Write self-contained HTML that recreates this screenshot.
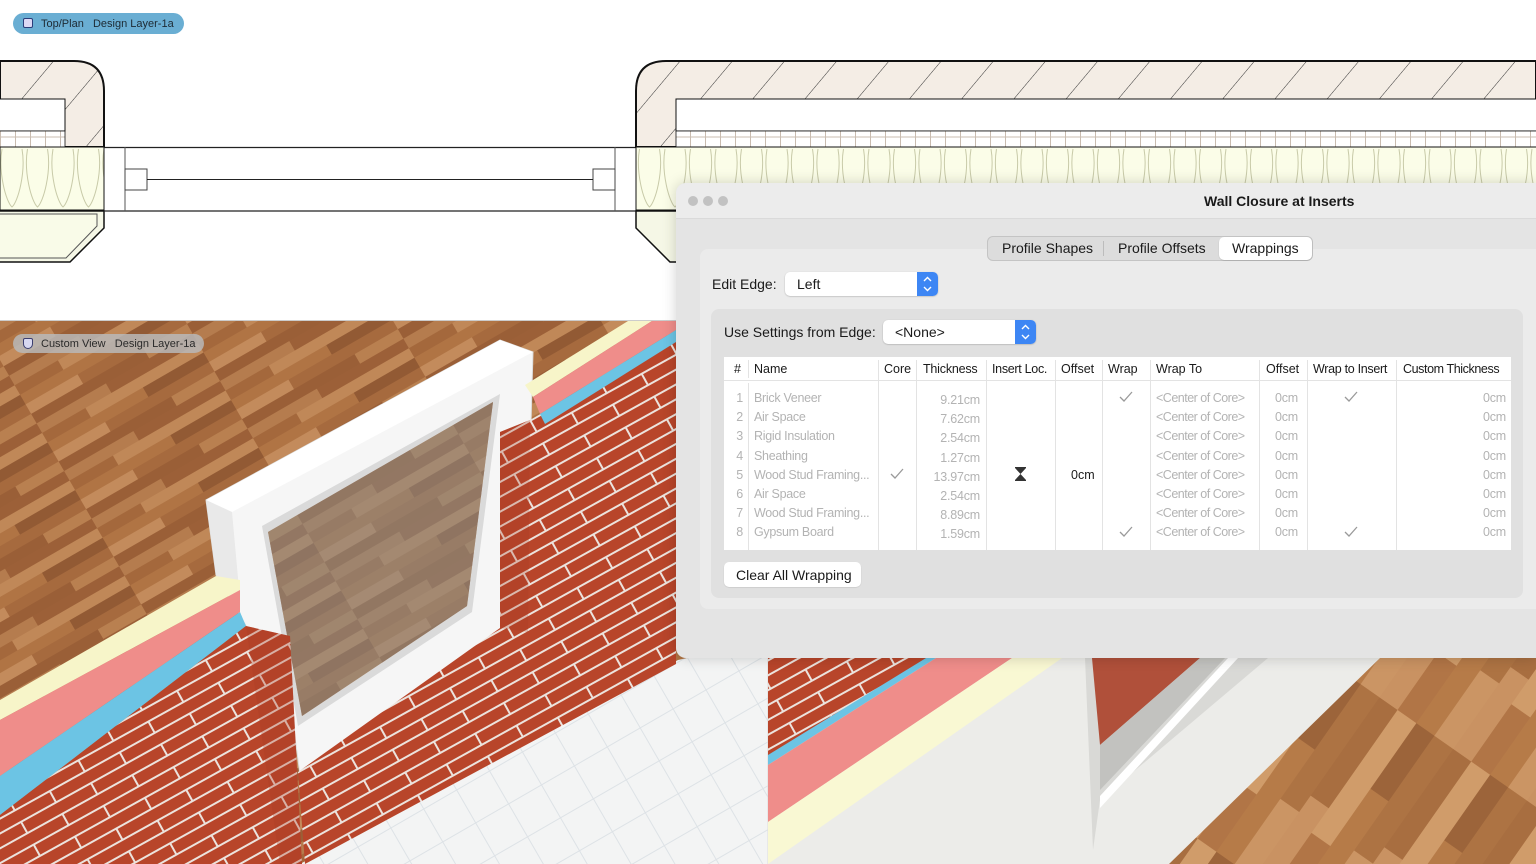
<!DOCTYPE html>
<html><head><meta charset="utf-8"><style>
*{margin:0;padding:0;box-sizing:border-box}
body{width:1536px;height:864px;position:relative;overflow:hidden;background:#fff;font-family:"Liberation Sans",sans-serif;color:#1a1a1a}
.a{position:absolute;white-space:nowrap}
.pill{position:absolute;border-radius:11px;font-size:11px;display:flex;align-items:center;padding-left:28px;color:#1d2a33}
.t{position:absolute;font-size:12.5px;line-height:16px;white-space:nowrap}
.g{color:#b3b3b3}
.r{text-align:right}
.pop{position:absolute;background:#fff;border-radius:5px;box-shadow:0 0.5px 1.5px rgba(0,0,0,.25);font-size:14px;padding-left:12px;line-height:24px}
.step{position:absolute;right:0;top:0;width:21px;height:24px;background:#3d86f4;border-radius:0 5px 5px 0}
.vl{position:absolute;width:1px;background:#e3e3e3}
</style></head><body>

<!-- PLAN VIEW -->
<svg class="a" style="left:0;top:0" width="1536" height="322" viewBox="0 0 1536 322">
<defs>
<pattern id="hat" width="40" height="40" patternUnits="userSpaceOnUse" patternTransform="rotate(40)">
<rect width="40" height="40" fill="#f4ede5"/><line x1="0" y1="0" x2="0" y2="40" stroke="#333" stroke-width="1"/></pattern>
<pattern id="batt" width="25.5" height="63" patternUnits="userSpaceOnUse" x="0" y="147">
<rect width="25.5" height="63" fill="#fbfde8"/>
<path d="M2,2 C-2,25 6,55 12,60 C18,55 26,25 22,2" fill="none" stroke="#c8caa8" stroke-width="1"/></pattern>
<pattern id="grid" width="15" height="16" patternUnits="userSpaceOnUse" x="0" y="131">
<rect width="15" height="16" fill="#fff"/><line x1="0.5" y1="0" x2="0.5" y2="16" stroke="#c9bcb0"/><line x1="0" y1="6" x2="15" y2="6" stroke="#c9bcb0"/></pattern>
</defs>
<path d="M0,61 H74 Q104,61 104,91 V147 H0 Z" fill="url(#hat)" stroke="#111" stroke-width="2"/>
<rect x="-1" y="99" width="66" height="32" fill="#fff" stroke="#111" stroke-width="1"/>
<rect x="-1" y="131" width="66" height="16" fill="url(#grid)" stroke="#111" stroke-width="0.8"/>
<rect x="0" y="147" width="104" height="63" fill="url(#batt)" stroke="#111" stroke-width="1"/>
<path d="M0,211 H104 V228 L70,262 H0" fill="#f5f7e6" stroke="#111" stroke-width="1.5"/>
<path d="M0,214 H97 V226 L66,258 H0" fill="#f9fbe8" stroke="#555" stroke-width="1"/>
<line x1="104" y1="147.5" x2="636" y2="147.5" stroke="#222" stroke-width="1.2"/>
<line x1="104" y1="211" x2="636" y2="211" stroke="#222" stroke-width="1.2"/>
<line x1="125" y1="147" x2="125" y2="211" stroke="#555"/>
<line x1="615" y1="147" x2="615" y2="211" stroke="#555"/>
<rect x="125" y="169" width="22" height="21" fill="#fff" stroke="#444"/>
<rect x="593" y="169" width="22" height="21" fill="#fff" stroke="#444"/>
<line x1="147" y1="179.5" x2="593" y2="179.5" stroke="#222"/>
<path d="M1536,61 H666 Q636,61 636,91 V147 H1536 Z" fill="url(#hat)" stroke="#111" stroke-width="2"/>
<rect x="676" y="99" width="870" height="32" fill="#fff" stroke="#111" stroke-width="1"/>
<rect x="676" y="131" width="870" height="16" fill="url(#grid)" stroke="#111" stroke-width="0.8"/>
<rect x="636" y="147" width="910" height="63" fill="url(#batt)" stroke="#111" stroke-width="1"/>
<path d="M676,211 H636 V228 L670,262 H676" fill="#f5f7e6" stroke="#111" stroke-width="1.5"/>
<line x1="0" y1="320.5" x2="1536" y2="320.5" stroke="#ccc"/>
</svg>
<div class="pill" style="left:13px;top:13px;width:171px;height:21px;background:#6aaed3">
<span style="position:absolute;left:10px;top:5px;width:10px;height:10px;border:1.5px solid #2b3d7a;background:#dcd8f5;border-radius:2px"></span>Top/Plan&nbsp;&nbsp; Design Layer-1a</div>

<!-- 3D LEFT -->
<svg class="a" style="left:0;top:321px" width="768" height="543" viewBox="0 321 768 543">
<defs>
<pattern id="wood" width="180" height="55" patternUnits="userSpaceOnUse" patternTransform="rotate(-30)">
<rect width="180" height="55" fill="#a96c40"/>
<rect x="0" y="0" width="80" height="11" fill="#b57c4e"/><rect x="80" y="0" width="100" height="11" fill="#9c6038"/>
<rect x="0" y="11" width="50" height="11" fill="#a4683c"/><rect x="50" y="11" width="130" height="11" fill="#c08858"/>
<rect x="0" y="22" width="110" height="11" fill="#b07444"/><rect x="110" y="22" width="70" height="11" fill="#925a34"/>
<rect x="0" y="33" width="60" height="11" fill="#c38b5c"/><rect x="60" y="33" width="120" height="11" fill="#a66a3e"/>
<rect x="0" y="44" width="130" height="11" fill="#9a5f37"/><rect x="130" y="44" width="50" height="11" fill="#b98050"/>
</pattern>
<pattern id="brick" width="80" height="26" patternUnits="userSpaceOnUse" patternTransform="rotate(-29)">
<rect width="80" height="26" fill="#b8452a"/>
<line x1="0" y1="1" x2="80" y2="1" stroke="#ece3dd" stroke-width="2"/>
<line x1="0" y1="14" x2="80" y2="14" stroke="#ece3dd" stroke-width="2"/>
<line x1="20" y1="0" x2="20" y2="13" stroke="#ece3dd" stroke-width="2"/>
<line x1="60" y1="13" x2="60" y2="26" stroke="#ece3dd" stroke-width="2"/>
</pattern>
<pattern id="tile" width="38" height="38" patternUnits="userSpaceOnUse" patternTransform="rotate(-30)">
<rect width="38" height="38" fill="#f3f4f4"/><path d="M0,0.5 H38 M0.5,0 V38" stroke="#dde2e6"/></pattern>
</defs>
<rect x="0" y="321" width="768" height="543" fill="url(#wood)"/>
<polygon points="300,864 678,660 768,640 768,864" fill="url(#tile)"/>
<!-- window -->
<polygon points="206,500 500,340 533,352 525,640 300,775 290,700 216,575" fill="#f6f6f6" stroke="#dcdcdc"/>
<polygon points="206,500 500,340 533,352 232,512" fill="#ffffff"/>
<polygon points="206,500 232,512 240,600 216,575" fill="#e9e9e9"/>
<polygon points="262,526 500,394 472,612 298,726" fill="#dadada"/>
<polygon points="268,532 493,402 467,606 302,716" fill="url(#wood)"/>
<polygon points="268,532 493,402 467,606 302,716" fill="#8d8a86" opacity=".55"/>
<!-- long brick wall (in front of window right side) -->
<polygon points="500,432 530,420 676,335 676,664 305,864 298,772 500,628" fill="url(#brick)"/>
<polygon points="500,432 530,420 528,632 500,628" fill="#a53a22" opacity=".25"/>
<polygon points="525,385 628,321 652,321 533,397" fill="#f7f5c9"/>
<polygon points="533,397 652,321 676,321 676,330 540,414" fill="#ef8d8a"/>
<polygon points="540,414 676,330 676,342 545,424" fill="#6cc4e4"/>
<!-- left front wall -->
<polygon points="0,700 216,576 240,580 240,590 0,720" fill="#f7f5c9"/>
<polygon points="0,720 240,590 240,612 0,776" fill="#ef8d8a"/>
<polygon points="0,776 240,612 246,626 0,815" fill="#6cc4e4"/>
<polygon points="0,815 246,626 290,636 302,864 0,864" fill="url(#brick)"/>
<polygon points="246,626 290,636 302,864 280,864" fill="#a83c24" opacity=".3"/>
<line x1="768" y1="321" x2="768" y2="864" stroke="#ddd"/>
</svg>
<div class="pill" style="left:13px;top:334px;width:191px;height:19px;background:rgba(185,185,185,.85);color:#2a2a2a">
<span style="position:absolute;left:10px;top:4px;width:10px;height:11px;border:1.5px solid #3c3f70;background:#d8d8f0;border-radius:2px 2px 5px 5px"></span>Custom View&nbsp;&nbsp; Design Layer-1a</div>

<!-- 3D BOTTOM RIGHT -->
<svg class="a" style="left:768px;top:658px" width="768" height="206" viewBox="768 658 768 206">
<defs>
<pattern id="wood2" width="220" height="90" patternUnits="userSpaceOnUse" patternTransform="rotate(-55)">
<rect width="220" height="90" fill="#b97f4a"/>
<rect x="0" y="0" width="100" height="22" fill="#c99262"/><rect x="100" y="0" width="120" height="22" fill="#a86e40"/>
<rect x="0" y="22" width="70" height="23" fill="#b17546"/><rect x="70" y="22" width="150" height="23" fill="#d09c6a"/>
<rect x="0" y="45" width="140" height="22" fill="#b67b48"/><rect x="140" y="45" width="80" height="22" fill="#9c643a"/>
<rect x="0" y="67" width="80" height="23" fill="#cb9564"/><rect x="80" y="67" width="140" height="23" fill="#ad7343"/>
</pattern>
</defs>
<rect x="768" y="658" width="768" height="206" fill="#ecece9"/>
<polygon points="768,658 930,658 768,760" fill="url(#brick)"/>
<polygon points="768,755 926,658 936,658 768,765" fill="#6cc4e4"/>
<polygon points="768,765 936,658 1012,658 768,822" fill="#ef8d8a"/>
<polygon points="1012,658 1062,658 768,864 768,822" fill="#f9f8d3"/>
<polygon points="1085,658 1268,658 1100,800 1093,850" fill="#d9d9d6"/>
<polygon points="1092,658 1200,658 1100,745" fill="#b0503a"/>
<polygon points="1200,658 1225,658 1100,790 1100,745" fill="#c2c2bf"/>
<polygon points="1228,658 1238,658 1100,808 1100,796" fill="#fff"/>
<polygon points="1380,658 1536,658 1536,864 1169,864" fill="url(#wood2)"/>
</svg>

<!-- DIALOG -->
<div class="a" style="left:676px;top:183px;width:860px;height:475px;background:#e4e4e4;box-shadow:0 0 14px rgba(0,0,0,.18);border-radius:10px 0 0 10px;overflow:hidden">
<div class="a" style="left:0;top:0;width:860px;height:36px;background:#ececec;border-bottom:1px solid #dadada"></div>
<div class="a" style="left:12px;top:13px;width:10px;height:10px;border-radius:5px;background:#c2c2c2"></div>
<div class="a" style="left:27px;top:13px;width:10px;height:10px;border-radius:5px;background:#c2c2c2"></div>
<div class="a" style="left:42px;top:13px;width:10px;height:10px;border-radius:5px;background:#c2c2c2"></div>
<div class="a" style="left:528px;top:10px;font-size:14px;font-weight:bold;color:#1a1a1a">Wall Closure at Inserts</div>
</div>
<div class="a" style="left:700px;top:249px;width:836px;height:360px;background:#ebebeb;border-radius:8px 0 0 8px"></div>
<div class="a" style="left:987px;top:236px;width:326px;height:25px;background:#dcdcdc;border:1px solid #c4c4c4;border-radius:6px"></div>
<div class="a" style="left:1219px;top:237px;width:93px;height:23px;background:#fff;border-radius:5px;box-shadow:0 0.5px 1px rgba(0,0,0,.2)"></div>
<div class="a" style="left:1103px;top:241px;width:1px;height:15px;background:#bcbcbc"></div>
<div class="t" style="left:1002px;top:240px;font-size:14px">Profile Shapes</div>
<div class="t" style="left:1118px;top:240px;font-size:14px">Profile Offsets</div>
<div class="t" style="left:1232px;top:240px;font-size:14px">Wrappings</div>

<div class="t" style="left:712px;top:276px;font-size:14px">Edit Edge:</div>
<div class="pop" style="left:785px;top:272px;width:153px;height:24px">Left<div class="step"><svg width="21" height="24"><path d="M7,9 L10.5,5.5 L14,9 M7,15 L10.5,18.5 L14,15" fill="none" stroke="#fff" stroke-width="1.4"/></svg></div></div>

<div class="a" style="left:711px;top:309px;width:812px;height:289px;background:#e0e0e0;border-radius:8px"></div>
<div class="t" style="left:724px;top:324px;font-size:14px">Use Settings from Edge:</div>
<div class="pop" style="left:883px;top:320px;width:153px;height:24px">&lt;None&gt;<div class="step"><svg width="21" height="24"><path d="M7,9 L10.5,5.5 L14,9 M7,15 L10.5,18.5 L14,15" fill="none" stroke="#fff" stroke-width="1.4"/></svg></div></div>

<!-- table -->
<div class="a" style="left:724px;top:357px;width:787px;height:193px;background:#fff"></div>
<div class="a" style="left:724px;top:380px;width:787px;height:1px;background:#e3e3e3"></div>
<div class="vl" style="left:748px;top:360px;height:18px"></div>
<div class="vl" style="left:878px;top:360px;height:190px"></div>
<div class="vl" style="left:916px;top:360px;height:190px"></div>
<div class="vl" style="left:986px;top:360px;height:190px"></div>
<div class="vl" style="left:1055px;top:360px;height:190px"></div>
<div class="vl" style="left:1102px;top:360px;height:190px"></div>
<div class="vl" style="left:1150px;top:360px;height:190px"></div>
<div class="vl" style="left:1259px;top:360px;height:190px"></div>
<div class="vl" style="left:1307px;top:360px;height:190px"></div>
<div class="vl" style="left:1396px;top:360px;height:190px"></div>
<div class="vl" style="left:748px;top:383px;height:167px"></div>
<div class="t" style="left:734px;top:361px">#</div>
<div class="t" style="left:754px;top:361px">Name</div>
<div class="t" style="left:884px;top:361px">Core</div>
<div class="t" style="left:923px;top:361px;letter-spacing:-0.2px">Thickness</div>
<div class="t" style="left:992px;top:361px;letter-spacing:-0.3px">Insert Loc.</div>
<div class="t" style="left:1061px;top:361px">Offset</div>
<div class="t" style="left:1108px;top:361px">Wrap</div>
<div class="t" style="left:1156px;top:361px">Wrap To</div>
<div class="t" style="left:1266px;top:361px">Offset</div>
<div class="t" style="left:1313px;top:361px;letter-spacing:-0.3px">Wrap to Insert</div>
<div class="t" style="left:1403px;top:361px;letter-spacing:-0.4px">Custom Thickness</div>

<div class="a g" style="left:724px;top:389px;font-size:12.5px;line-height:19.2px;letter-spacing:-0.2px">
<div class="a r" style="left:0;width:19px">1<br>2<br>3<br>4<br>5<br>6<br>7<br>8</div>
<div class="a" style="left:30px;letter-spacing:-0.3px">Brick Veneer<br>Air Space<br>Rigid Insulation<br>Sheathing<br>Wood Stud Framing...<br>Air Space<br>Wood Stud Framing...<br>Gypsum Board</div>
<div class="a r" style="left:192px;width:64px;top:2px">9.21cm<br>7.62cm<br>2.54cm<br>1.27cm<br>13.97cm<br>2.54cm<br>8.89cm<br>1.59cm</div>
<div class="a" style="left:432px;letter-spacing:-0.5px">&lt;Center of Core&gt;<br>&lt;Center of Core&gt;<br>&lt;Center of Core&gt;<br>&lt;Center of Core&gt;<br>&lt;Center of Core&gt;<br>&lt;Center of Core&gt;<br>&lt;Center of Core&gt;<br>&lt;Center of Core&gt;</div>
<div class="a" style="left:551px">0cm<br>0cm<br>0cm<br>0cm<br>0cm<br>0cm<br>0cm<br>0cm</div>
<div class="a r" style="left:700px;width:82px">0cm<br>0cm<br>0cm<br>0cm<br>0cm<br>0cm<br>0cm<br>0cm</div>
</div>
<svg class="a" style="left:0;top:0" width="1536" height="864" viewBox="0 0 1536 864">
<g fill="none" stroke="#9a9a9a" stroke-width="1.3">
<path d="M891,474 L895,478 L903,469"/>
<path d="M1120,397 L1124,401 L1132,392"/>
<path d="M1120,532 L1124,536 L1132,527"/>
<path d="M1345,397 L1349,401 L1357,392"/>
<path d="M1345,532 L1349,536 L1357,527"/>
</g>
<path d="M1015,468 H1026 L1020.5,474 Z M1015,480 H1026 L1020.5,474 Z" fill="#333"/>
<path d="M1015,467.5 H1026 M1015,480.5 H1026" stroke="#333"/>
</svg>
<div class="t" style="left:1071px;top:467px">0cm</div>

<div class="a" style="left:724px;top:562px;width:137px;height:25px;background:#fff;border-radius:5px;box-shadow:0 0.5px 1px rgba(0,0,0,.15)"></div>
<div class="t" style="left:736px;top:567px;font-size:14px">Clear All Wrapping</div>
</body></html>
